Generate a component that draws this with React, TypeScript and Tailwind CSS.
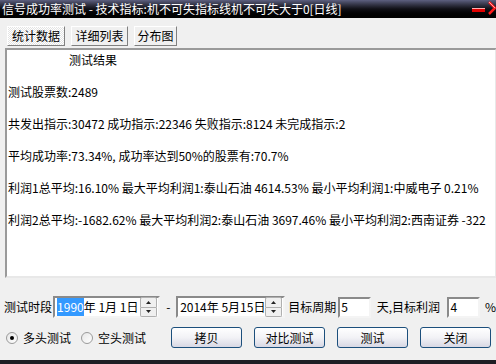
import React from 'react';

const font = "font-['SimSun','Noto_Sans_CJK_SC',sans-serif]";

const Spinner = () => (
  <div className="flex flex-col w-[17px] h-[20px] ml-auto">
    <div className="flex-1 flex items-center justify-center bg-[#f0f0f0] border border-[#b0b0b0] rounded-t-[2px]">
      <svg width="5" height="3" viewBox="0 0 5 3"><path d="M2.5 0L5 3H0z" fill="#222" /></svg>
    </div>
    <div className="flex-1 flex items-center justify-center bg-[#f0f0f0] border border-t-0 border-[#b0b0b0] rounded-b-[2px]">
      <svg width="5" height="3" viewBox="0 0 5 3"><path d="M0 0H5L2.5 3z" fill="#222" /></svg>
    </div>
  </div>
);

const Sunken = ({ className, children }: { className: string; children?: React.ReactNode }) => (
  <div className={`bg-white border-2 border-t-[#8a8a8a] border-l-[#8a8a8a] border-b-[#f4f4f4] border-r-[#f4f4f4] flex items-center ${className}`}>
    {children}
  </div>
);

const Button = ({ label, className }: { label: string; className: string }) => (
  <div className={`h-[21px] rounded-[3px] border border-[#1c4f7c] bg-gradient-to-b from-white via-[#f2f2f6] to-[#d8d8e4] flex items-center justify-center text-[12px] ${className}`}>
    {label}
  </div>
);

const Radio = ({ on }: { on?: boolean }) => (
  <div className="w-[12px] h-[12px] rounded-full border border-[#9a9a9a] bg-gradient-to-br from-[#e6e6e6] to-white flex items-center justify-center">
    {on && <div className="w-[4px] h-[4px] rounded-full bg-black" />}
  </div>
);

const lines = [
  '测试股票数:2489',
  '共发出指示:30472 成功指示:22346 失败指示:8124 未完成指示:2',
  '平均成功率:73.34%, 成功率达到50%的股票有:70.7%',
  '利润1总平均:16.10% 最大平均利润1:泰山石油 4614.53% 最小平均利润1:中威电子 0.21%',
  '利润2总平均:-1682.62% 最大平均利润2:泰山石油 3697.46% 最小平均利润2:西南证券 -322',
];

export default function App() {
  return (
    <div className={`w-[496px] h-[364px] overflow-hidden bg-[#f0f0f0] flex flex-col text-black text-[12px] ${font}`}>
      {/* title bar */}
      <div className="h-[18px] shrink-0 bg-gradient-to-b from-[#5d6080] via-[#101016] to-black flex items-center pl-[2px] text-white leading-none relative">
        <span className="whitespace-nowrap">信号成功率测试 - 技术指标:机不可失指标线机不可失大于0[日线]</span>
        <svg className="absolute left-[472px] top-[8px]" width="14" height="5" viewBox="0 0 14 5">
          <rect x="0" y="0" width="13" height="4" fill="#e00000" />
          <rect x="0" y="0" width="13" height="1" fill="#ffb0b0" />
        </svg>
        <svg className="absolute left-[488px] top-[1px]" width="10" height="14" viewBox="0 0 10 14">
          <path d="M1 1L7 7L1 13" stroke="#ff1a1a" strokeWidth="2.5" fill="none" />
          <path d="M1 1L7 7" stroke="#ffd0d0" strokeWidth="0.8" fill="none" />
        </svg>
      </div>

      {/* tabs */}
      <div className="flex mt-[8px] ml-[7px] h-[20px] gap-[6px]">
        <div className="w-[58px] flex items-center justify-center border border-t-white border-l-white border-b-[#808080] border-r-[#808080] bg-[repeating-conic-gradient(#ffffff_0%_25%,#e4e4e4_0%_50%)] bg-[length:2px_2px]">统计数据</div>
        <div className="w-[57px] flex items-center justify-center border border-t-white border-l-white border-b-[#808080] border-r-[#808080]">详细列表</div>
        <div className="w-[43px] flex items-center justify-center border border-t-white border-l-white border-b-[#808080] border-r-[#808080]">分布图</div>
      </div>

      {/* results */}
      <div className="mt-[2px] ml-[5px] w-[492px] h-[230px] shrink-0 bg-white border-2 border-t-[#9a9a9a] border-l-[#9a9a9a] border-b-[#e8e8e8] border-r-[#e8e8e8] overflow-hidden">
        <div className="flex flex-col gap-[18px] pt-[3px] pl-[1px]">
          <div className="h-[14px] leading-[14px] pl-[61px] whitespace-nowrap">测试结果</div>
          {lines.map((l) => (
            <div key={l} className="h-[14px] leading-[14px] whitespace-nowrap">{l}</div>
          ))}
        </div>
      </div>

      {/* date row */}
      <div className="flex items-center mt-[18px] h-[22px] pl-[4px] whitespace-nowrap">
        <span className="w-[50px]">测试时段</span>
        <Sunken className="w-[109px] h-[22px] pl-[2px] pr-[1px]">
          <span className="bg-[#3399ff] text-white">1990</span>
          <span>年 1月 1日</span>
          <Spinner />
        </Sunken>
        <span className="ml-[6px] w-[10px]">-</span>
        <Sunken className="w-[109px] h-[22px] pl-[2px] pr-[1px]">
          <span>2014年 5月15日</span>
          <Spinner />
        </Sunken>
        <span className="ml-[3px] w-[51px]">目标周期</span>
        <Sunken className="w-[33px] h-[21px] pl-[1px]">5</Sunken>
        <span className="ml-[6px] w-[72px]">天,目标利润</span>
        <Sunken className="w-[33px] h-[21px] pl-[1px]">4</Sunken>
        <span className="ml-[5px]">%</span>
      </div>

      {/* options + buttons */}
      <div className="flex items-center mt-[9px] h-[21px] pl-[6px] whitespace-nowrap">
        <Radio on />
        <span className="ml-[5px] w-[58px]">多头测试</span>
        <Radio />
        <span className="ml-[5px] w-[73px]">空头测试</span>
        <Button label="拷贝" className="w-[71px]" />
        <Button label="对比测试" className="w-[71px] ml-[12px]" />
        <Button label="测试" className="w-[71px] ml-[12px]" />
        <Button label="关闭" className="w-[71px] ml-[12px]" />
      </div>

      <div className="mt-auto h-[4px] bg-[#1e1e24] shrink-0" />
    </div>
  );
}
